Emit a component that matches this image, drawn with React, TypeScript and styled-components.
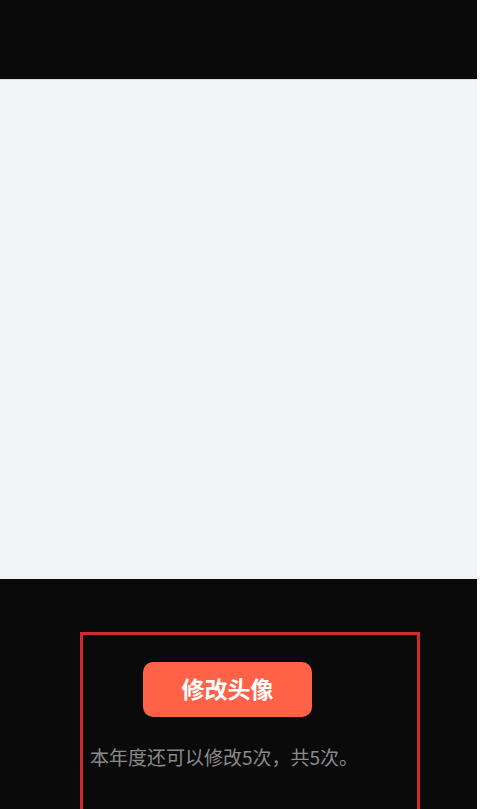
import React from "react";
import styled, { createGlobalStyle } from "styled-components";

const Global = createGlobalStyle`
  html, body { margin: 0; padding: 0; background: #ffffff; }
  body { font-family: "Noto Sans CJK SC", "Noto Sans", sans-serif; }
`;

const Page = styled.div`
  width: 477px;
  height: 809px;
  display: flex;
  flex-direction: column;
  background: #0a0a0a;
  overflow: hidden;
`;

const TopBar = styled.div`
  height: 79px;
  flex: none;
  background: #0a0a0a;
`;

const Preview = styled.div`
  height: 499px;
  flex: none;
  background: #f2f3f5;
  border-top: 1px solid #dcdde0;
`;

const Bottom = styled.div`
  flex: 1;
  padding: 53px 0 0 80px;
  background: #0a0a0a;
`;

const Frame = styled.div`
  box-sizing: border-box;
  width: 340px;
  height: 230px;
  border: 3px solid #cf2b2e;
  border-bottom: none;
  padding: 27px 0 0 7px;
  display: flex;
  flex-direction: column;
  align-items: flex-start;
`;

const Button = styled.button`
  margin-left: 53px;
  width: 169px;
  height: 55px;
  border: none;
  border-radius: 10px;
  background: #ff6246;
  color: #ffffff;
  font-family: "Noto Sans CJK SC", sans-serif;
  font-size: 23px;
  font-weight: 700;
  line-height: 1;
  display: flex;
  align-items: center;
  justify-content: center;
  padding: 0 0 2px 0;
`;

const Hint = styled.p`
  margin: 27px 0 0 0;
  font-size: 19px;
  line-height: 26px;
  color: #8b8b8b;
  font-family: "Noto Sans CJK SC", sans-serif;
  white-space: nowrap;
`;

export default function App() {
  return (
    <>
      <Global />
      <Page>
        <TopBar />
        <Preview />
        <Bottom>
          <Frame>
            <Button>修改头像</Button>
            <Hint>本年度还可以修改5次，共5次。</Hint>
          </Frame>
        </Bottom>
      </Page>
    </>
  );
}
